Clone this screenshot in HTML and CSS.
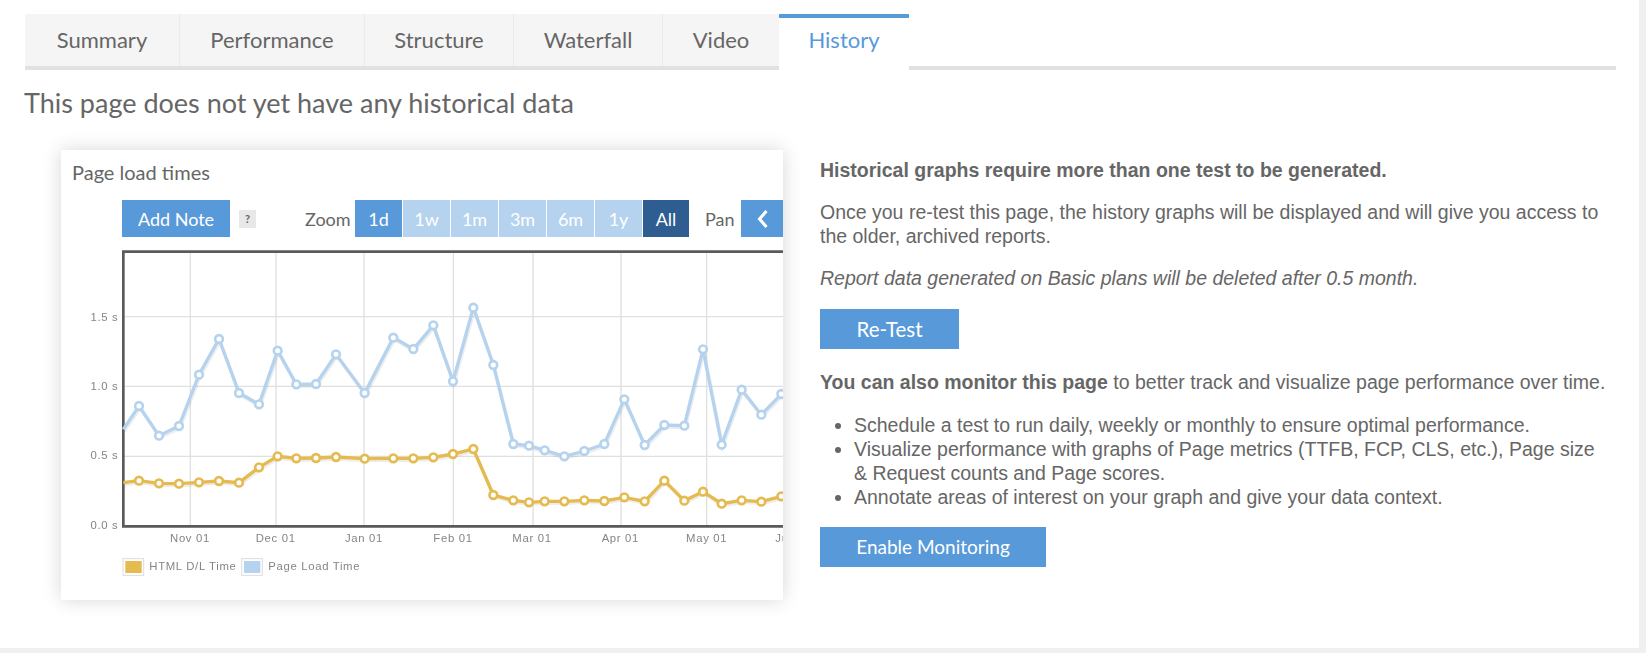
FILE: index.html
```html
<!DOCTYPE html>
<html lang="en">
<head>
<meta charset="utf-8">
<title>History</title>
<link rel="stylesheet" href="styles.css">
</head>
<body>
<main class="page">
  <nav class="tabs">
    <a class="tab tab-summary">Summary</a>
    <a class="tab tab-performance">Performance</a>
    <a class="tab tab-structure">Structure</a>
    <a class="tab tab-waterfall">Waterfall</a>
    <a class="tab tab-video">Video</a>
    <a class="tab tab-active">History</a>
  </nav>
  <h1 class="heading">This page does not yet have any historical data</h1>
  <section class="history">
    <figure class="card">
      <figcaption class="card-title">Page load times</figcaption>
      <div class="toolbar">
        <span class="btn add-note">Add Note</span>
        <span class="help">?</span>
        <span class="label zoom-label">Zoom</span>
        <div class="ranges">
          <span class="range r-1d">1d</span>
          <span class="range light">1w</span>
          <span class="range light">1m</span>
          <span class="range light">3m</span>
          <span class="range light">6m</span>
          <span class="range light">1y</span>
          <span class="range r-all">All</span>
        </div>
        <span class="label pan-label">Pan</span>
        <span class="pan-btn">
          <svg width="16" height="22" viewBox="0 0 16 22"><path d="M11.5 3 4.5 11l7 8" fill="none" stroke="#fff" stroke-width="3"/></svg>
        </span>
      </div>
      <svg class="chart" width="722" height="345" viewBox="33 -15 2166 1035">
        <g class="grid">
          <path d="M220 200H2199M220 409H2199M220 619H2199"/>
          <path d="M421 5V829M678 5V829M942 5V829M1210 5V829M1449 5V829M1713 5V829M1970 5V829"/>
        </g>
        <path class="frame" d="M2199 5H220V829H2199"/>
        <g class="axis">
          <text x="205" y="212" text-anchor="end">1.5 s</text>
          <text x="205" y="421" text-anchor="end">1.0 s</text>
          <text x="205" y="628" text-anchor="end">0.5 s</text>
          <text x="205" y="838" text-anchor="end">0.0 s</text>
          <text x="420" y="877" text-anchor="middle">Nov 01</text>
          <text x="677" y="877" text-anchor="middle">Dec 01</text>
          <text x="942" y="877" text-anchor="middle">Jan 01</text>
          <text x="1209" y="877" text-anchor="middle">Feb 01</text>
          <text x="1446" y="877" text-anchor="middle">Mar 01</text>
          <text x="1711" y="877" text-anchor="middle">Apr 01</text>
          <text x="1970" y="877" text-anchor="middle">May 01</text>
          <text x="2176" y="877">Jun 01</text>
        </g>
        <polyline class="line blue-shadow" points="220,538 267,468 327,557 387,528 447,374 507,267 567,429 627,463 683,302 739,403 798,402 858,313 944,429 1030,263 1090,297 1150,226 1209,394 1270,173 1330,345 1390,582 1437,587 1484,601 1543,619 1603,603 1663,582 1723,448 1784,585 1843,525 1903,527 1959,298 2015,584 2075,419 2134,494 2194,432 2250,400"/>
        <polyline class="line blue" points="220,538 267,468 327,557 387,528 447,374 507,267 567,429 627,463 683,302 739,403 798,402 858,313 944,429 1030,263 1090,297 1150,226 1209,394 1270,173 1330,345 1390,582 1437,587 1484,601 1543,619 1603,603 1663,582 1723,448 1784,585 1843,525 1903,527 1959,298 2015,584 2075,419 2134,494 2194,432 2250,400"/>
        <polyline class="line yellow-shadow" points="220,698 267,692 327,700 387,701 447,697 507,693 567,698 627,652 683,619 739,625 798,624 858,621 944,626 1030,625 1090,625 1150,622 1209,612 1270,597 1330,735 1390,751 1437,757 1484,754 1543,754 1603,751 1663,753 1723,742 1784,754 1843,692 1903,752 1959,725 2015,761 2075,751 2134,755 2194,739 2250,730"/>
        <polyline class="line yellow" points="220,698 267,692 327,700 387,701 447,697 507,693 567,698 627,652 683,619 739,625 798,624 858,621 944,626 1030,625 1090,625 1150,622 1209,612 1270,597 1330,735 1390,751 1437,757 1484,754 1543,754 1603,751 1663,753 1723,742 1784,754 1843,692 1903,752 1959,725 2015,761 2075,751 2134,755 2194,739 2250,730"/>
        <path class="dots dots-blue" d="M267 468h0M327 557h0M387 528h0M447 374h0M507 267h0M567 429h0M627 463h0M683 302h0M739 403h0M798 402h0M858 313h0M944 429h0M1030 263h0M1090 297h0M1150 226h0M1209 394h0M1270 173h0M1330 345h0M1390 582h0M1437 587h0M1484 601h0M1543 619h0M1603 603h0M1663 582h0M1723 448h0M1784 585h0M1843 525h0M1903 527h0M1959 298h0M2015 584h0M2075 419h0M2134 494h0M2194 432h0"/>
        <path class="dots dots-in" d="M267 468h0M327 557h0M387 528h0M447 374h0M507 267h0M567 429h0M627 463h0M683 302h0M739 403h0M798 402h0M858 313h0M944 429h0M1030 263h0M1090 297h0M1150 226h0M1209 394h0M1270 173h0M1330 345h0M1390 582h0M1437 587h0M1484 601h0M1543 619h0M1603 603h0M1663 582h0M1723 448h0M1784 585h0M1843 525h0M1903 527h0M1959 298h0M2015 584h0M2075 419h0M2134 494h0M2194 432h0"/>
        <path class="dots dots-yellow" d="M267 692h0M327 700h0M387 701h0M447 697h0M507 693h0M567 698h0M627 652h0M683 619h0M739 625h0M798 624h0M858 621h0M944 626h0M1030 625h0M1090 625h0M1150 622h0M1209 612h0M1270 597h0M1330 735h0M1390 751h0M1437 757h0M1484 754h0M1543 754h0M1603 751h0M1663 753h0M1723 742h0M1784 754h0M1843 692h0M1903 752h0M1959 725h0M2015 761h0M2075 751h0M2134 755h0M2194 739h0"/>
        <path class="dots dots-in" d="M267 692h0M327 700h0M387 701h0M447 697h0M507 693h0M567 698h0M627 652h0M683 619h0M739 625h0M798 624h0M858 621h0M944 626h0M1030 625h0M1090 625h0M1150 622h0M1209 612h0M1270 597h0M1330 735h0M1390 751h0M1437 757h0M1484 754h0M1543 754h0M1603 751h0M1663 753h0M1723 742h0M1784 754h0M1843 692h0M1903 752h0M1959 725h0M2015 761h0M2075 751h0M2134 755h0M2194 739h0"/>
        <rect class="swatch-box" x="219" y="926" width="62" height="50"/>
        <rect class="swatch-yellow" x="226" y="933" width="49" height="36"/>
        <text class="legend" x="298" y="960">HTML D/L Time</text>
        <rect class="swatch-box" x="575" y="926" width="62" height="50"/>
        <rect class="swatch-blue" x="582" y="933" width="49" height="36"/>
        <text class="legend" x="655" y="960">Page Load Time</text>
      </svg>
    </figure>
    <div class="info">
      <p><strong>Historical graphs require more than one test to be generated.</strong></p>
      <p>Once you re-test this page, the history graphs will be displayed and will give you access to the older, archived reports.</p>
      <p class="plan-note"><em>Report data generated on Basic plans will be deleted after 0.5 month.</em></p>
      <a class="cta retest">Re-Test</a>
      <p class="monitor-line"><strong>You can also monitor this page</strong> to better track and visualize page performance over time.</p>
      <ul class="list">
        <li>Schedule a test to run daily, weekly or monthly to ensure optimal performance.</li>
        <li>Visualize performance with graphs of Page metrics (TTFB, FCP, CLS, etc.), Page size &amp; Request counts and Page scores.</li>
        <li>Annotate areas of interest on your graph and give your data context.</li>
      </ul>
      <a class="cta monitor">Enable Monitoring</a>
    </div>
  </section>
</main>
</body>
</html>
```

FILE: styles.css
```css
* { box-sizing: border-box; }
html, body { margin: 0; height: 100%; }
body {
  background: #f0f0f0;
  overflow: hidden;
  color: #666;
  font-family: "Liberation Sans", Arial, sans-serif;
}
.page {
  width: 1639px;
  height: 648px;
  background: #fff;
  padding: 14px 23px 0 25px;
}
.tabs {
  display: flex;
  height: 56px;
  border-bottom: 4px solid #e1e1e1;
  font-family: Lato, "Noto Sans", sans-serif;
  font-size: 22px;
}
.tab {
  display: flex;
  align-items: center;
  justify-content: center;
  height: 52px;
  padding-bottom: 2px;
  background: #f5f5f5;
  border-right: 1px solid #ebebeb;
  color: #666;
}
.tab-summary { width: 155px; }
.tab-performance { width: 185px; }
.tab-structure { width: 149px; }
.tab-waterfall { width: 149px; }
.tab-video { width: 116px; border-right: 0; }
.tab-active {
  width: 130px;
  height: 56px;
  background: #fff;
  border-top: 4px solid #5899d9;
  border-right: 0;
  color: #5899d9;
  padding-bottom: 9px;
}
.heading {
  margin: 16px 0 0 -1px;
  font-family: Lato, "Noto Sans", sans-serif;
  font-size: 27px;
  line-height: 34px;
  font-weight: 400;
  color: #666;
}
.history {
  display: flex;
  gap: 37px;
  margin: 30px 0 0 36px;
}
.card {
  flex: none;
  width: 722px;
  height: 450px;
  margin: 0;
  background: #fff;
  box-shadow: 0 0 18px rgba(0, 0, 0, .16);
  overflow: hidden;
}
.card-title {
  font-family: Lato, "Noto Sans", sans-serif;
  font-size: 20px;
  line-height: 24px;
  padding: 10px 0 0 11px;
  color: #666;
}
.toolbar {
  display: flex;
  align-items: center;
  height: 37px;
  margin: 16px 0 0 61px;
  width: 700px;
  font-family: Lato, "Noto Sans", sans-serif;
  font-size: 18px;
  color: #fff;
}
.btn {
  display: flex;
  align-items: center;
  justify-content: center;
  width: 108px;
  height: 37px;
  background: #5899d9;
}
.help {
  width: 17px;
  height: 18px;
  margin-left: 9px;
  background: #e8e8e8;
  color: #666;
  font-size: 11px;
  font-weight: 700;
  line-height: 18px;
  text-align: center;
}
.label { color: #666; }
.zoom-label { margin-left: 49px; width: 50px; }
.ranges { display: flex; gap: 1px; height: 37px; }
.range {
  display: flex;
  align-items: center;
  justify-content: center;
  width: 47px;
  background: #5899d9;
}
.range.light { background: #b5d3ee; }
.range.r-all { background: #2d5d91; width: 46px; }
.r-1d { width: 47px; }
.pan-label { margin-left: 16px; width: 36px; }
.pan-btn {
  display: flex;
  align-items: center;
  justify-content: center;
  flex: none;
  width: 43px;
  height: 37px;
  background: #5899d9;
}
.chart {
  display: block;
  margin-top: 8px;
  filter: blur(.45px);
}
.grid path { fill: none; stroke: #e0e0e0; stroke-width: 4; }
.frame { fill: none; stroke: #5a5a5a; stroke-width: 8; }
.axis text, .legend {
  font-family: "Liberation Sans", Arial, sans-serif;
  font-size: 34px;
  letter-spacing: 2px;
  fill: #858585;
}
.line { fill: none; stroke-linejoin: miter; }
.blue { stroke: #b5d3ee; stroke-width: 10; }
.yellow { stroke: #e5bb50; stroke-width: 10; }
.blue-shadow, .yellow-shadow { stroke: rgba(0, 0, 0, .07); stroke-width: 10; transform: translate(3px, 6px); }
.dots { fill: none; stroke-linecap: round; }
.dots-blue { stroke: #b5d3ee; stroke-width: 31; }
.dots-in { stroke: #fff; stroke-width: 15; }
.dots-yellow { stroke: #e5bb50; stroke-width: 31; }
.swatch-box { fill: #fff; stroke: #ddd; stroke-width: 3; }
.swatch-yellow { fill: #e5bb50; }
.swatch-blue { fill: #b5d3ee; }
.info {
  width: 792px;
  font-size: 19.5px;
  line-height: 24px;
  color: #666;
  padding-top: 8px;
}
.info p { margin: 0 0 18px; }
.info .plan-note { margin-bottom: 19px; }
.info .monitor-line { margin-bottom: 19px; }
.cta {
  display: flex;
  align-items: center;
  justify-content: center;
  height: 40px;
  margin-bottom: 21px;
  background: #5899d9;
  color: #fff;
  font-family: Lato, "Noto Sans", sans-serif;
}
.retest { width: 139px; font-size: 20.5px; }
.monitor { width: 226px; font-size: 19px; }
.list { margin: 0 0 18px; padding: 0 0 0 34px; }
```
